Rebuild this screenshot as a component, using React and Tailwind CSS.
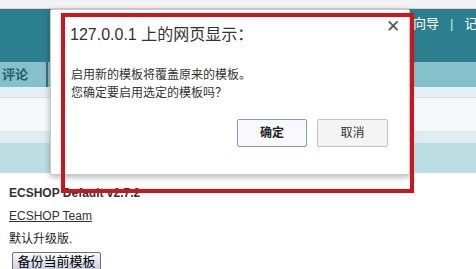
import React from 'react';

const font = { fontFamily: '"Liberation Sans", "Noto Sans CJK SC", sans-serif' };

export default function App() {
  return (
    <div className="relative w-[476px] h-[269px] overflow-hidden bg-white text-[#222]" style={font}>
      {/* page background */}
      <div className="h-[9px] bg-[#f3f3f3] border-b border-[#d6d6d6]" />
      <div className="h-[53px] bg-[#2b7f8e] flex items-start pt-[6px] overflow-hidden">
        <div className="ml-[413px] whitespace-nowrap text-white text-[13px] leading-[18px] flex gap-[11px]">
          <span>向导</span>
          <span className="text-[#cfe7ec]">|</span>
          <span>记事</span>
        </div>
      </div>
      <div className="h-[25px] bg-[#86c0cb] flex">
        <div className="w-[48px] border-r-2 border-[#3f6f79] flex items-center pl-[2px] text-[13px] font-bold text-[#24606c]">评论</div>
      </div>
      <div className="h-[11px] bg-[#e4f0f3] border-b border-[#d2e3e8]" />
      <div className="h-[33px] bg-[#f5f9fb]" />
      <div className="h-[12px] bg-[#dfedf1] border-t border-[#d7e7eb]" />
      <div className="h-[30px] bg-[#bbdee4]" />

      <div className="pl-[9px] pt-[13px] text-[12px] leading-[14px]">
        <div className="font-bold text-[#333]">ECSHOP Default v2.7.2</div>
        <div className="mt-[9px] underline text-[#333]">ECSHOP Team</div>
        <div className="mt-[9px] text-[#222]">默认升级版.</div>
        <button className="mt-[6px] ml-[3px] h-[20px] w-[89px] border border-[#707070] rounded-[2px] bg-gradient-to-b from-[#fafafa] to-[#c7cbe0] text-[13px] leading-[16px] text-black">备份当前模板</button>
      </div>

      {/* browser alert dialog */}
      <div className="absolute left-[50px] top-[9px] w-[360px] h-[166px] bg-white border border-[#c9c9c9] rounded-[2px] shadow-[0_2px_6px_rgba(0,0,0,0.3)] flex flex-col">
        <div className="flex items-start justify-between pl-[19px] pr-[9px] pt-[15px]">
          <div className="text-[16px] leading-[20px] text-[#333]">127.0.0.1 上的网页显示：</div>
          <span className="-mt-[6px] text-[#555] text-[17px] leading-[16px]">✕</span>
        </div>
        <div className="pl-[20px] pt-[21px] text-[12px] leading-[18px] text-[#333]">
          <div>启用新的模板将覆盖原来的模板。</div>
          <div>您确定要启用选定的模板吗？</div>
        </div>
        <div className="flex justify-end gap-[10px] pr-[21px] pt-[17px]">
          <button className="w-[70px] h-[28px] border border-[#7e9cbd] rounded-[2px] bg-[#f7f9fb] text-[12px] font-bold text-[#222]">确定</button>
          <button className="w-[71px] h-[28px] border border-[#c3c3c3] rounded-[2px] bg-[#f4f4f4] text-[12px] text-[#333]">取消</button>
        </div>
      </div>

      {/* red annotation frame */}
      <div className="absolute left-[61px] top-[13px] w-[353px] h-[180px] border-[4px] border-[#d0141c]" />
    </div>
  );
}
